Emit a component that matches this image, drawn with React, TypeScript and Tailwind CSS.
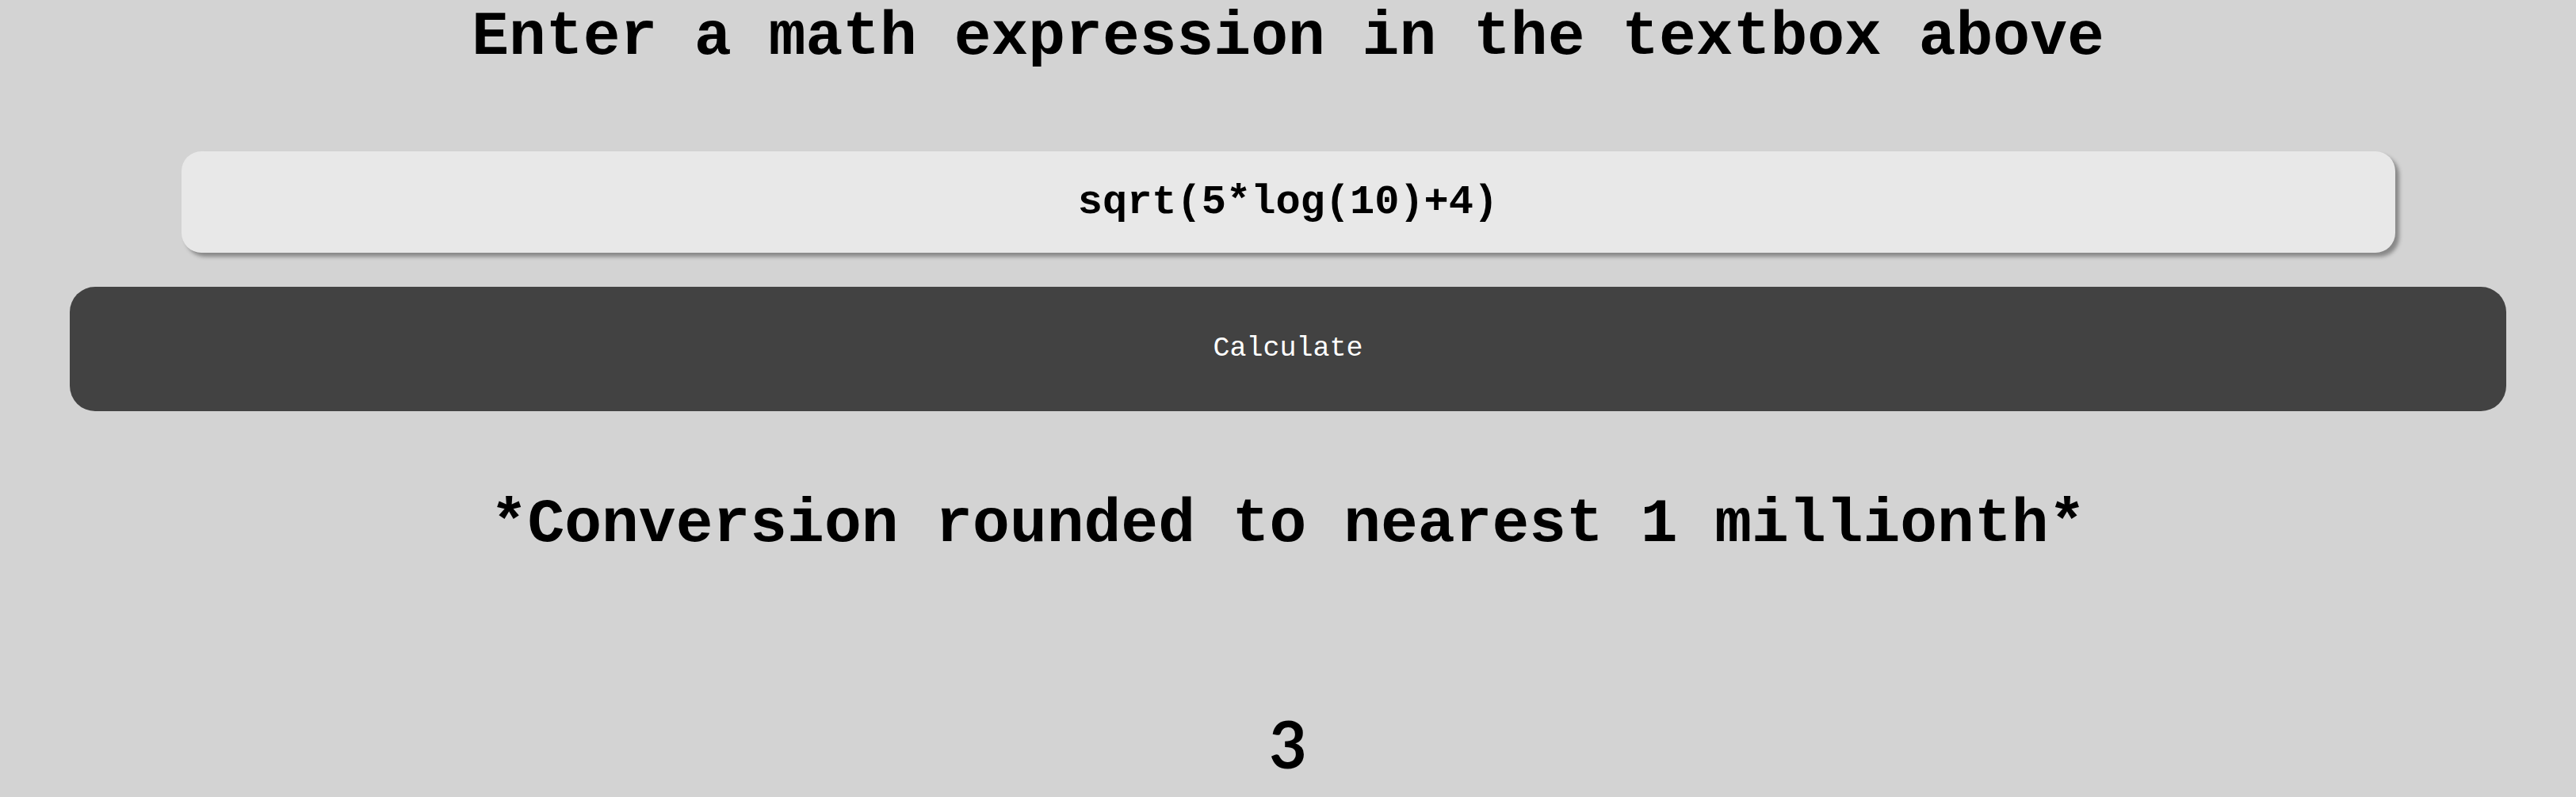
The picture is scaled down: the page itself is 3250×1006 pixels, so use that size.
import React from "react";

export default function App() {
  return (
    <div className="min-h-[1006px] w-full bg-[#d3d3d3] flex flex-col items-center text-black font-['Liberation_Mono','Courier_New',monospace]">
      <h1 className="pt-[3px] text-[78px] font-bold leading-[88px] text-center whitespace-nowrap">
        Enter a math expression in the textbox above
      </h1>
      <input
        readOnly
        value="sqrt(5*log(10)+4)"
        className="mt-[100px] w-[2793px] h-[128px] rounded-[25px] bg-[#e8e8e8] text-center text-[52px] font-bold text-black outline-none border-0 shadow-[5px_5px_5px_#888888] font-['Liberation_Mono','Courier_New',monospace]"
      />
      <div className="mt-[43px] self-stretch px-[88px]">
        <button className="w-full h-[157px] rounded-[32px] bg-[#424242] text-white text-[35px] flex items-center justify-center font-['Liberation_Mono','Courier_New',monospace]">
          Calculate
        </button>
      </div>
      <p className="mt-[99px] text-[78px] font-bold leading-[88px] text-center whitespace-nowrap">
        *Conversion rounded to nearest 1 millionth*
      </p>
      <div className="mt-[192px] text-[82px] font-bold leading-[80px] text-center font-['Lato','Noto_Sans',sans-serif]">
        3
      </div>
    </div>
  );
}
